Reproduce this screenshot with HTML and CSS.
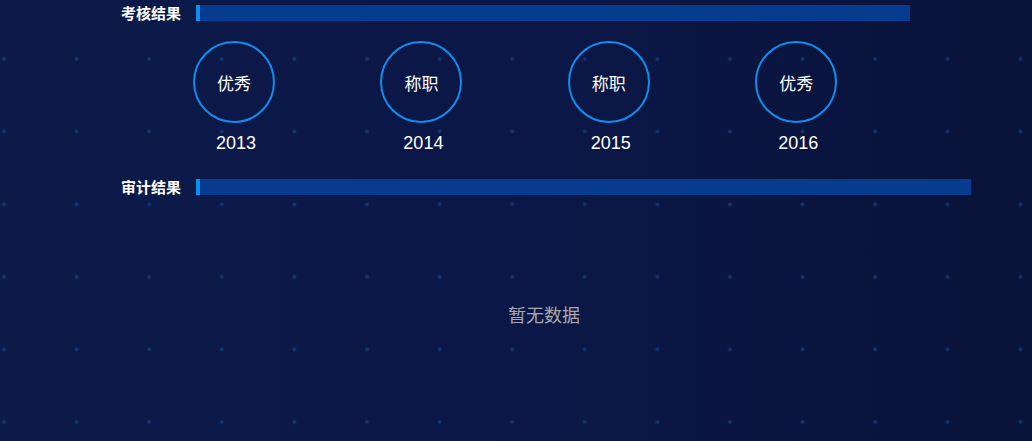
FILE: index.html
```html
<!DOCTYPE html>
<html lang="zh-CN">
<head>
<meta charset="utf-8">
<title>考核结果</title>
<link rel="stylesheet" href="styles.css">
</head>
<body>
<div class="page">
  <section class="sec">
    <div class="sec-head">
      <span class="sec-title">考核结果</span>
      <div class="sec-bar bar-short"></div>
    </div>
    <div class="grades">
      <div class="grade"><div class="ring">优秀</div><div class="year">2013</div></div>
      <div class="grade"><div class="ring">称职</div><div class="year">2014</div></div>
      <div class="grade"><div class="ring">称职</div><div class="year">2015</div></div>
      <div class="grade"><div class="ring">优秀</div><div class="year">2016</div></div>
    </div>
  </section>
  <section class="sec sec-audit">
    <div class="sec-head">
      <span class="sec-title">审计结果</span>
      <div class="sec-bar bar-long"></div>
    </div>
    <div class="empty">暂无数据</div>
  </section>
</div>
</body>
</html>
```
FILE: styles.css
```css
html, body {
  margin: 0;
  padding: 0;
  height: 100%;
}
body {
  font-family: "Noto Sans CJK SC", "Liberation Sans", sans-serif;
  color: #fff;
  background-color: #0b1641;
  background-image:
    radial-gradient(circle, rgba(24, 78, 150, 0.55) 1.4px, rgba(24, 78, 150, 0) 2.4px),
    linear-gradient(90deg, #0c1a4a 0%, #0b1746 55%, #091339 100%);
  background-size: 72.6px 72.6px, 100% 100%;
  background-position: -32.3px 22.7px, 0 0;
  overflow: hidden;
}
.page {
  padding-top: 5px;
}
.sec-head {
  display: flex;
  align-items: center;
  height: 16px;
  padding-left: 121px;
}
.sec-title {
  width: 75px;
  font-size: 15px;
  font-weight: 700;
  line-height: 16px;
  white-space: nowrap;
}
.sec-bar {
  height: 16px;
  background: #063b8d;
  border-left: 4px solid #0b8ff2;
  box-sizing: border-box;
}
.bar-short { width: 714px; }
.bar-long { width: 775px; }

.grades {
  display: flex;
  gap: 105.4px;
  padding-left: 193px;
  margin-top: 20px;
}
.grade {
  display: flex;
  flex-direction: column;
  align-items: center;
  width: 82px;
}
.ring {
  width: 82px;
  height: 82px;
  box-sizing: border-box;
  border: 2px solid #0d8ef0;
  border-radius: 50%;
  display: flex;
  align-items: center;
  justify-content: center;
  font-size: 17px;
  line-height: 1;
}
.year {
  margin-top: 10px;
  padding-left: 4px;
  font-family: "Liberation Sans", sans-serif;
  font-size: 18px;
  line-height: 20px;
}
.sec-audit {
  margin-top: 26px;
}
.empty {
  margin-top: 107px;
  padding-left: 56px;
  text-align: center;
  font-size: 18px;
  line-height: 24px;
  color: #a8a8ad;
}
```
